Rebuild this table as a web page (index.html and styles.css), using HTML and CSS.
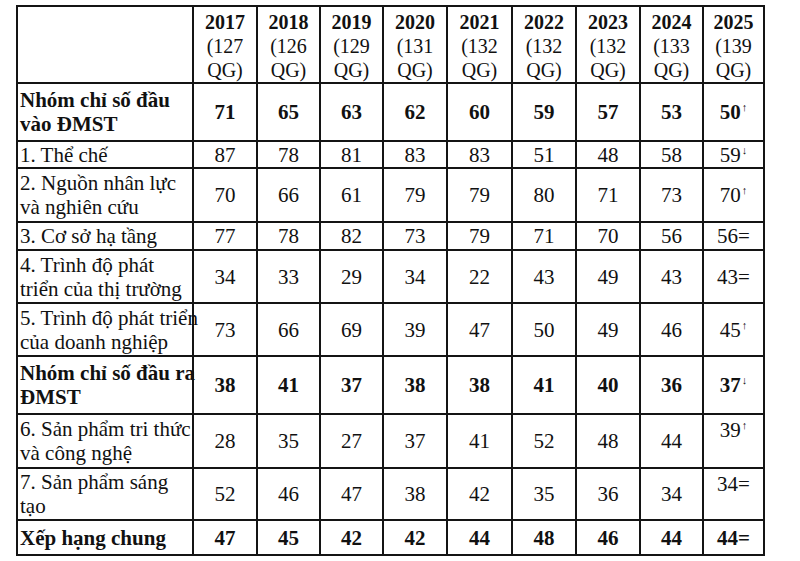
FILE: index.html
```html
<!DOCTYPE html>
<html>
<head>
<meta charset="utf-8">
<title>Xếp hạng GII</title>
<link rel="stylesheet" href="styles.css">
</head>
<body>
<table class="gii">
  <colgroup>
    <col class="c-label"><col class="c64"><col class="c63"><col class="c63"><col class="c64"><col class="c65"><col class="c64"><col class="c64"><col class="c63"><col class="c61">
  </colgroup>
  <tr class="r-head">
    <td></td>
    <th><b>2017</b><br>(127<br>QG)</th>
    <th><b>2018</b><br>(126<br>QG)</th>
    <th><b>2019</b><br>(129<br>QG)</th>
    <th><b>2020</b><br>(131<br>QG)</th>
    <th><b>2021</b><br>(132<br>QG)</th>
    <th><b>2022</b><br>(132<br>QG)</th>
    <th><b>2023</b><br>(132<br>QG)</th>
    <th><b>2024</b><br>(133<br>QG)</th>
    <th><b>2025</b><br>(139<br>QG)</th>
  </tr>
  <tr class="r58 bold">
    <td class="lbl">Nhóm chỉ số đầu<br>vào ĐMST</td>
    <td>71</td><td>65</td><td>63</td><td>62</td><td>60</td><td>59</td><td>57</td><td>53</td><td>50<sup class="arr">↑</sup></td>
  </tr>
  <tr class="r27">
    <td class="lbl">1. Thể chế</td>
    <td>87</td><td>78</td><td>81</td><td>83</td><td>83</td><td>51</td><td>48</td><td>58</td><td>59<sup class="arr">↓</sup></td>
  </tr>
  <tr class="r54">
    <td class="lbl">2. Nguồn nhân lực<br>và nghiên cứu</td>
    <td>70</td><td>66</td><td>61</td><td>79</td><td>79</td><td>80</td><td>71</td><td>73</td><td>70<sup class="arr">↑</sup></td>
  </tr>
  <tr class="r28">
    <td class="lbl">3. Cơ sở hạ tầng</td>
    <td>77</td><td>78</td><td>82</td><td>73</td><td>79</td><td>71</td><td>70</td><td>56</td><td>56=</td>
  </tr>
  <tr class="r53">
    <td class="lbl">4. Trình độ phát<br>triển của thị trường</td>
    <td>34</td><td>33</td><td>29</td><td>34</td><td>22</td><td>43</td><td>49</td><td>43</td><td>43=</td>
  </tr>
  <tr class="r53">
    <td class="lbl">5. Trình độ phát triển<br>của doanh nghiệp</td>
    <td>73</td><td>66</td><td>69</td><td>39</td><td>47</td><td>50</td><td>49</td><td>46</td><td>45<sup class="arr">↑</sup></td>
  </tr>
  <tr class="r58 bold">
    <td class="lbl">Nhóm chỉ số đầu ra<br>ĐMST</td>
    <td>38</td><td>41</td><td>37</td><td>38</td><td>38</td><td>41</td><td>40</td><td>36</td><td>37<sup class="arr">↓</sup></td>
  </tr>
  <tr class="r54">
    <td class="lbl">6. Sản phẩm tri thức<br>và công nghệ</td>
    <td>28</td><td>35</td><td>27</td><td>37</td><td>41</td><td>52</td><td>48</td><td>44</td><td class="top">39<sup class="arr">↑</sup></td>
  </tr>
  <tr class="r52">
    <td class="lbl">7. Sản phẩm sáng<br>tạo</td>
    <td>52</td><td>46</td><td>47</td><td>38</td><td>42</td><td>35</td><td>36</td><td>34</td><td class="top">34=</td>
  </tr>
  <tr class="r35 bold">
    <td class="lbl">Xếp hạng chung</td>
    <td>47</td><td>45</td><td>42</td><td>42</td><td>44</td><td>48</td><td>46</td><td>44</td><td>44=</td>
  </tr>
</table>
</body>
</html>
```

FILE: styles.css
```css
html, body {
  margin: 0;
  padding: 0;
  background: #fff;
}

body {
  padding: 5px 0 0 16px;
  font-family: "Liberation Serif", "Times New Roman", serif;
  color: #111;
}

.gii {
  border-collapse: collapse;
  table-layout: fixed;
  width: 747px;
  font-size: 21px;
}

.c-label { width: 176px; }
.c61 { width: 61px; }
.c63 { width: 63px; }
.c64 { width: 64px; }
.c65 { width: 65px; }

.gii td,
.gii th {
  border: 2px solid #141414;
  padding: 0;
  text-align: center;
  vertical-align: middle;
  line-height: 24px;
  white-space: nowrap;
  overflow: visible;
}

.gii th {
  font-weight: normal;
  line-height: 24px;
  vertical-align: top;
  padding-top: 3px;
  font-size: 20px;
}

.gii th b {
  font-weight: bold;
  font-size: 20px;
}

.gii .lbl {
  text-align: left;
  padding-left: 2px;
}

.bold td {
  font-weight: bold;
}

.gii td.top {
  vertical-align: top;
  padding-top: 3px;
}

.arr {
  font-size: 11px;
  line-height: 0;
  vertical-align: 8px;
  margin-left: 1px;
}

.r-head { height: 77px; }
.r58 { height: 58px; }
.r27 { height: 27px; }
.r28 { height: 28px; }
.r35 { height: 35px; }
.r52 { height: 52px; }
.r53 { height: 53px; }
.r54 { height: 54px; }
```
